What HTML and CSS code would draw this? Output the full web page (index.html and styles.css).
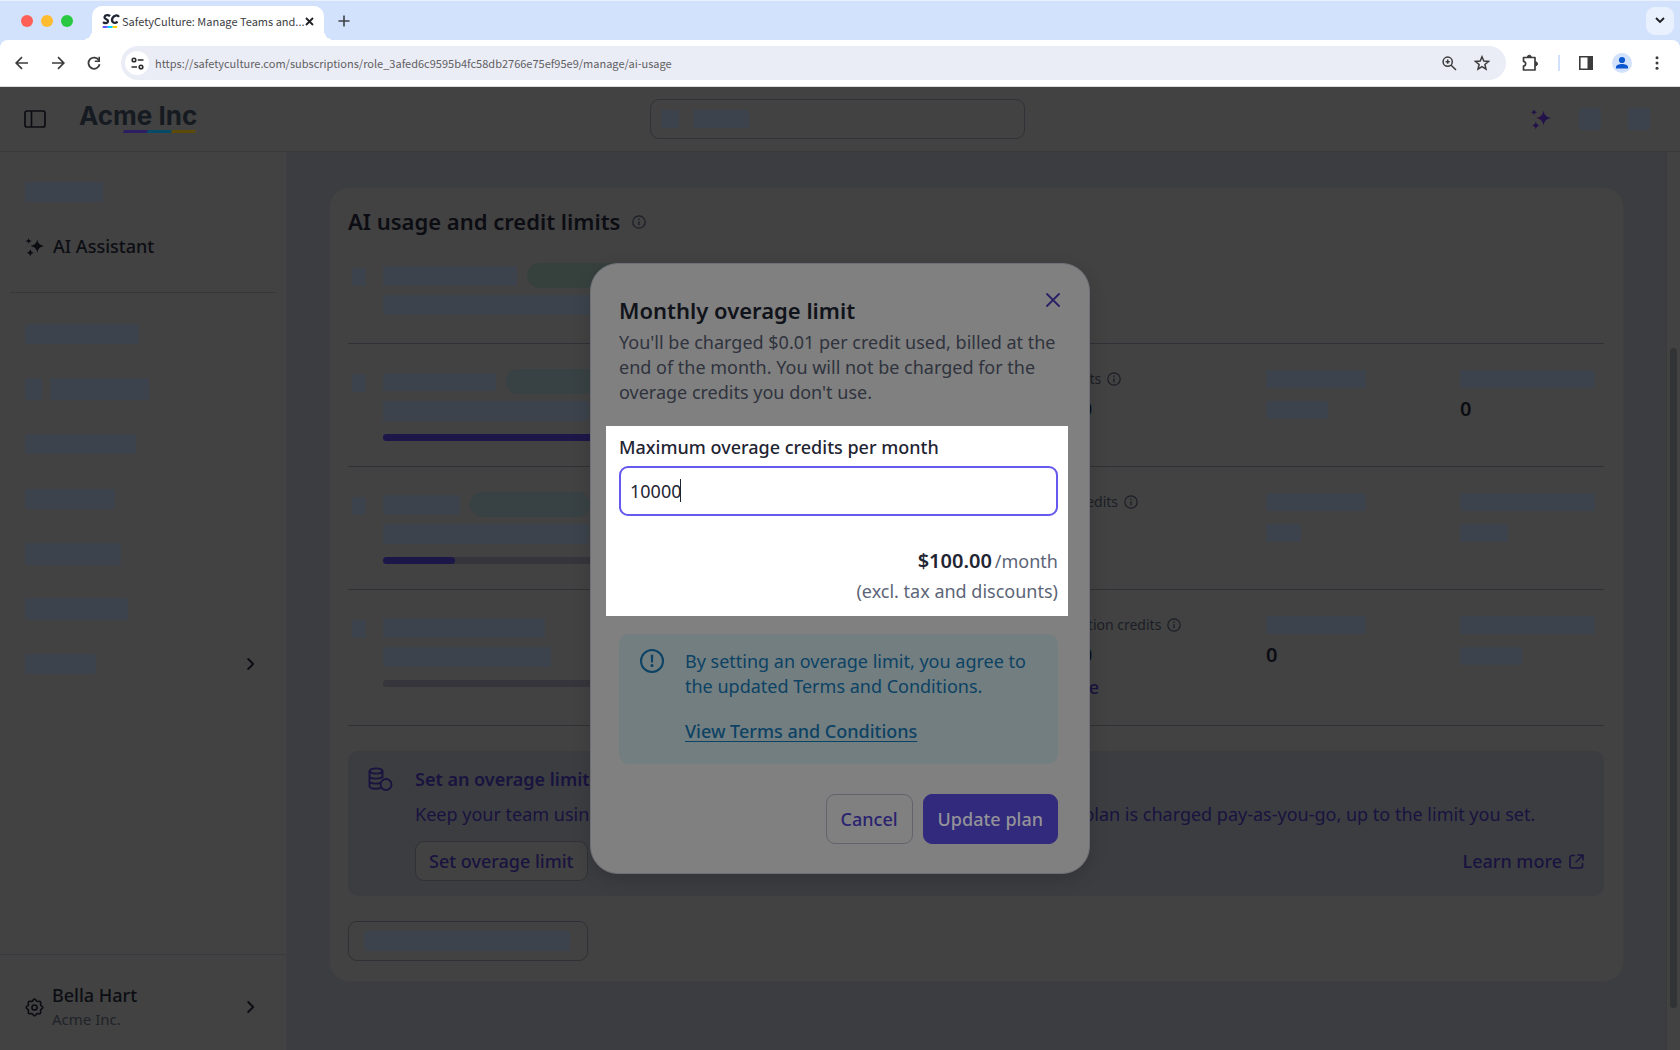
FILE: index.html
```html
<!DOCTYPE html>
<html lang="en">
<head>
<meta charset="utf-8">
<meta name="viewport" content="width=device-width, initial-scale=1">
<title>SafetyCulture: Manage Teams and Users</title>
<link rel="stylesheet" href="styles.css">
</head>
<body>
<svg class="sprite" aria-hidden="true">
  <symbol id="info" viewBox="0 0 14 14"><circle cx="7" cy="7" r="6.2" fill="none" stroke="currentColor" stroke-width="1.2"/><path d="M7 6.2v4M7 3.6v1.3" stroke="currentColor" stroke-width="1.3" fill="none"/></symbol>
  <symbol id="chevron" viewBox="0 0 8 12"><path d="M1.2 1l5 5-5 5" fill="none" stroke="currentColor" stroke-width="1.8" stroke-linecap="round" stroke-linejoin="round"/></symbol>
  <symbol id="sparkles" viewBox="0 0 22 22"><path d="M13.500 2.500c.9 4.600 2.400 6.200 7.500 7.500-5.100 1.300-6.600 2.900-7.500 7.500-.9-4.600-2.400-6.200-7.500-7.500 5.100-1.300 6.600-2.900 7.500-7.500z"/><path d="M4 1c.4 2 1.200 2.800 3.200 3.300C5.200 4.800 4.400 5.600 4 7.600 3.600 5.600 2.800 4.800.8 4.300 2.800 3.800 3.600 3 4 1z"/><path d="M5.800 13.200c.5 2.600 1.500 3.600 4 4.200-2.500.6-3.500 1.600-4 4.200-.5-2.600-1.500-3.600-4-4.200 2.500-.6 3.500-1.600 4-4.200z"/></symbol>
</svg>

<div class="tabstrip">
  <div class="lights"><i class="light red"></i><i class="light amber"></i><i class="light green"></i></div>
  <div class="tab">
    <svg class="favicon" viewBox="0 0 18 18" aria-hidden="true"><path d="M8 4.300C6.800 2.900 3 2.600 2.500 5 2 7.600 6.600 7 6 9.600 5.600 11.500 2.600 11.500 1 10.200" fill="none" stroke="#1f2533" stroke-width="2.300"/><path d="M17 4.800C15.500 2.700 11.800 3 10.400 6.200 9 10 12 12.200 15.600 9.800" fill="none" stroke="#1f2533" stroke-width="2.300"/><path d="M1 14h5l-.6 2H.4z" fill="#6559ff"/><path d="M6 14h5l-.6 2h-5z" fill="#00d1ff"/><path d="M11 14h4.500l-.6 2h-4.500z" fill="#ffd500"/></svg>
    <span class="tab-title">SafetyCulture: Manage Teams and...</span>
    <button class="bare" aria-label="Close tab"><svg width="9" height="9" viewBox="0 0 9 9"><path d="M1 1l7 7M8 1L1 8" stroke="#202124" stroke-width="1.800"/></svg></button>
  </div>
  <button class="bare new-tab" aria-label="New tab"><svg width="12" height="12" viewBox="0 0 12 12"><path d="M6 .5v11M.5 6h11" stroke="#3c4043" stroke-width="1.600"/></svg></button>
  <button class="tab-search" aria-label="Search tabs"><svg width="10" height="7" viewBox="0 0 10 7"><path d="M1 1l4 4 4-4" fill="none" stroke="#202124" stroke-width="1.900"/></svg></button>
</div>
<div class="toolbar">
  <div class="nav">
    <button class="bare" aria-label="Back"><svg width="14" height="14" viewBox="0 0 14 14"><path d="M13 7H1.500M7 1.200L1.200 7 7 12.800" fill="none" stroke="#3c3c3c" stroke-width="1.700"/></svg></button>
    <button class="bare" aria-label="Forward"><svg width="14" height="14" viewBox="0 0 14 14"><path d="M1 7h11.500M7 1.200L12.800 7 7 12.800" fill="none" stroke="#3c3c3c" stroke-width="1.700"/></svg></button>
    <button class="bare" aria-label="Reload"><svg width="14" height="14" viewBox="0 0 14 14"><path d="M12 4.400A5.600 5.600 0 1 0 12.600 8.300" fill="none" stroke="#3c3c3c" stroke-width="1.800"/><path d="M13 .8v5.200H7.800V4.400h3.600V.8z" fill="#3c3c3c"/></svg></button>
  </div>
  <div class="omnibox">
    <button class="site-info" aria-label="Site information"><svg width="13" height="13" viewBox="0 0 13 13" fill="none" stroke="#2b2b2b" stroke-width="1.600"><circle cx="3" cy="3" r="1.800"/><path d="M6.800 3H12.500M.5 10H6"/><circle cx="10" cy="10" r="1.800"/></svg></button>
    <input class="url" aria-label="Address" value="https://safetyculture.com/subscriptions/role_3afed6c9595b4fc58db2766e75ef95e9/manage/ai-usage">
    <button class="bare" aria-label="Zoom"><svg width="15" height="15" viewBox="0 0 15 15" fill="none" stroke="#3c3c3c" stroke-width="1.500"><circle cx="5.700" cy="5.700" r="4.600"/><path d="M9.200 9.200l4.800 4.800M5.700 3.600v4.200M3.600 5.700h4.200"/></svg></button>
    <button class="bare" aria-label="Bookmark"><svg width="16" height="16" viewBox="0 0 16 16"><path d="M8 1.800l1.800 4.300 4.700.4-3.600 3 1.100 4.600L8 11.700l-4 2.400 1.100-4.600-3.600-3 4.700-.4z" fill="none" stroke="#3c3c3c" stroke-width="1.500"/></svg></button>
  </div>
  <div class="extras">
    <button class="bare" aria-label="Extensions"><svg width="18" height="18" viewBox="0 0 18 18"><path d="M2.500 3.500h11.500V16H2.500v-3.800c3-.7 3-4.200 0-4.900z" fill="none" stroke="#3c3c3c" stroke-width="1.700" stroke-linejoin="round"/><path d="M6.300 3.200a2 2 0 0 1 4 0zM14.500 7.800a2 2 0 0 1 0 4z" fill="#3c3c3c" stroke="#3c3c3c"/></svg></button>
    <i class="bar"></i>
    <button class="bare" aria-label="Side panel"><svg width="14" height="14" viewBox="0 0 14 14"><path d="M.8.8h12.400v12.400H.8z" fill="none" stroke="#3c3c3c" stroke-width="1.600"/><path d="M8.500 1H13v12H8.500z" fill="#3c3c3c"/></svg></button>
    <button class="bare" aria-label="Profile"><svg width="20" height="20" viewBox="0 0 20 20"><circle cx="10" cy="10" r="10" fill="#d3e2fc"/><circle cx="10" cy="7" r="3.100" fill="#0b57d0"/><path d="M4 15.500v-1.500c0-2 3-3 6-3s6 1 6 3v1.500z" fill="#0b57d0"/></svg></button>
    <button class="bare kebab" aria-label="Menu"><svg width="4" height="14" viewBox="0 0 4 14" fill="#3c3c3c"><circle cx="2" cy="1.700" r="1.500"/><circle cx="2" cy="7" r="1.500"/><circle cx="2" cy="12.300" r="1.500"/></svg></button>
  </div>
</div>

<div class="app">
  <header class="topbar">
    <div class="brand-row">
      <button class="bare panel-toggle" aria-label="Toggle sidebar"><svg width="22" height="18" viewBox="0 0 22 18"><rect x="1" y="1" width="20" height="16" rx="2" fill="none" stroke="currentColor" stroke-width="1.700"/><path d="M7.500 1v16" stroke="currentColor" stroke-width="1.600"/></svg></button>
      <div class="brand">Acme Inc<svg class="brand-line" width="74" height="3" viewBox="0 0 74 3"><path d="M1 0h24l-1 3H0z" fill="#2d1e63"/><path d="M25 0h24l-1 3H24z" fill="#074a68"/><path d="M49 0h24l-1 3H48z" fill="#5c4a08"/></svg></div>
    </div>
    <div class="search"><i class="sk sk-search-icon"></i><i class="sk sk-search-text"></i></div>
    <div class="top-actions">
      <svg width="22" height="22" class="ai-mark"><defs><linearGradient id="ai" x1="0" x2="1"><stop offset="0" stop-color="#3c0f33"/><stop offset=".35" stop-color="#24104b"/><stop offset="1" stop-color="#1c1748"/></linearGradient></defs><use href="#sparkles"/></svg>
      <i class="sk sk-action"></i><i class="sk sk-action"></i>
    </div>
  </header>

  <div class="body">
    <nav class="sidebar">
      <div class="side-list">
        <div class="side-item"><i class="sk h20 w78"></i></div>
        <a class="side-item side-link" href="#assistant"><svg width="20" height="20" fill="currentColor"><use href="#sparkles"/></svg>AI Assistant</a>
      </div>
      <hr class="side-rule">
      <div class="side-list">
        <div class="side-item"><i class="sk h20 w114"></i></div>
        <div class="side-item"><i class="sk h22 w17"></i><i class="sk h22 w99"></i></div>
        <div class="side-item"><i class="sk h20 w111"></i></div>
        <div class="side-item"><i class="sk h20 w90"></i></div>
        <div class="side-item"><i class="sk h22 w96"></i></div>
        <div class="side-item"><i class="sk h22 w103"></i></div>
        <div class="side-item"><i class="sk h20 w71"></i><svg class="side-chevron" width="8" height="12"><use href="#chevron"/></svg></div>
      </div>
      <a class="account" href="#account">
        <svg width="19" height="19" viewBox="0 0 24 24" fill="none" stroke="currentColor" stroke-width="2.100" stroke-linejoin="round"><circle cx="12" cy="12" r="3.200"/><path d="M9.600 3.600Q12-.6 14.400 3.600Q14.800 4.300 16.200 4.400Q20.800 3.200 19.600 7.800Q19.700 9 20.400 9.600Q24.600 12 20.400 14.400Q19.700 15 19.600 16.200Q20.800 20.800 16.200 19.600Q15 19.700 14.400 20.400Q12 24.600 9.600 20.400Q9 19.700 7.800 19.600Q3.200 20.800 4.400 16.200Q4.300 15 3.600 14.400Q-.6 12 3.600 9.600Q4.300 9 4.400 7.800Q3.200 3.200 7.800 4.400Q9 4.300 9.600 3.600z"/></svg>
        <span class="account-text"><span class="account-name">Bella Hart</span><span class="account-org">Acme Inc.</span></span>
        <svg class="side-chevron" width="8" height="12"><use href="#chevron"/></svg>
      </a>
    </nav>

    <main class="content">
      <section class="card">
        <h1 class="card-title">AI usage and credit limits <svg width="14" height="14"><use href="#info"/></svg></h1>

        <div class="usage usage-plan">
          <i class="sk mark"></i>
          <div class="meter">
            <div class="meter-head"><i class="sk h20 w134"></i><i class="pill pill-green"></i></div>
            <i class="sk h20 w240"></i>
          </div>
        </div>

        <div class="usage">
          <i class="sk mark"></i>
          <div class="meter">
            <div class="meter-head"><i class="sk h18 w113"></i><i class="pill"></i></div>
            <i class="sk h20 w206"></i>
            <div class="track"><div class="fill" style="width:100%"></div></div>
          </div>
          <div class="stat"><span class="stat-label">Action credits <svg width="14" height="14"><use href="#info"/></svg></span><span class="stat-value">1000000</span></div>
          <div class="stat"><i class="sk stat-sk w100"></i><i class="sk h18 w62"></i></div>
          <div class="stat"><i class="sk stat-sk w135"></i><span class="stat-value">0</span></div>
        </div>

        <div class="usage">
          <i class="sk mark"></i>
          <div class="meter">
            <div class="meter-head"><i class="sk h20 w77"></i><i class="pill"></i></div>
            <i class="sk h20 w206"></i>
            <div class="track"><div class="fill" style="width:11.5%"></div></div>
          </div>
          <div class="stat"><span class="stat-label">Analytics credits <svg width="14" height="14"><use href="#info"/></svg></span><span class="stat-value">500</span></div>
          <div class="stat"><i class="sk stat-sk w100"></i><i class="sk h18 w35"></i></div>
          <div class="stat"><i class="sk stat-sk w135"></i><i class="sk h18 w48"></i></div>
        </div>

        <div class="usage">
          <i class="sk mark"></i>
          <div class="meter">
            <div class="meter-head"><i class="sk h20 w162"></i></div>
            <i class="sk h20 w168"></i>
            <div class="track"></div>
          </div>
          <div class="stat"><span class="stat-label">AI transcription credits <svg width="14" height="14"><use href="#info"/></svg></span><span class="stat-value">1000000</span><a class="stat-link" href="#usage">See usage</a></div>
          <div class="stat"><i class="sk stat-sk w100"></i><span class="stat-value">0</span></div>
          <div class="stat"><i class="sk stat-sk w135"></i><i class="sk h18 w62"></i></div>
        </div>

        <div class="overage">
          <svg width="25" height="25" viewBox="0 0 25 25" fill="none" stroke="currentColor" stroke-width="1.900"><ellipse cx="8" cy="4" rx="6.500" ry="2.600"/><path d="M1.500 4v15c0 1.600 2.800 2.700 6.500 2.700 1.800 0 3.300-.2 4.500-.7M14.500 4v7M1.500 9c0 1.500 2.800 2.600 6.500 2.600S14.500 10.500 14.500 9M1.500 14c0 1.500 2.800 2.600 6.500 2.600 1.500 0 3-.2 4-.6"/><circle cx="18" cy="17.500" r="5.500"/></svg>
          <div class="overage-body">
            <h2 class="overage-title">Set an overage limit</h2>
            <p class="overage-text">Keep your team using AI without interruption. All usage beyond credits in your plan is charged pay-as-you-go, up to the limit you set.</p>
            <div class="overage-actions">
              <button class="outline-btn">Set overage limit</button>
              <a class="learn" href="#learn">Learn more <svg width="15" height="15" viewBox="0 0 15 15" fill="none" stroke="currentColor" stroke-width="1.600" stroke-linecap="round" stroke-linejoin="round"><path d="M5.500 1.500H3a2 2 0 0 0-2 2V12a2 2 0 0 0 2 2h8.500a2 2 0 0 0 2-2V9.500M9 1h5v5M13.800 1.200L7 8"/></svg></a>
            </div>
          </div>
        </div>

        <button class="outline-btn pending" aria-label="Manage credits"><i class="sk h20 w206"></i></button>
      </section>
    </main>
    <div class="scrollbar"><i class="thumb"></i></div>
  </div>

  <div class="overlay">
    <form class="modal" role="dialog" aria-labelledby="modal-title">
      <div class="modal-head">
        <h2 class="modal-title" id="modal-title">Monthly overage limit</h2>
        <p class="modal-text">You'll be charged $0.01 per credit used, billed at the end of the month. You will not be charged for the overage credits you don't use.</p>
      </div>
      <button type="button" class="bare close" aria-label="Close"><svg width="14" height="14" viewBox="0 0 14 14"><path d="M1 1l12 12M13 1L1 13" stroke="currentColor" stroke-width="1.800" stroke-linecap="round"/></svg></button>
      <div class="spotlight">
        <label class="field-label" for="credits">Maximum overage credits per month</label>
        <input class="field" id="credits" value="10000" inputmode="numeric">
        <i class="caret"></i>
        <div class="price"><strong class="amount">$100.00</strong><span>/month</span></div>
        <div class="price-note">(excl. tax and discounts)</div>
      </div>
      <div class="modal-foot">
        <div class="notice">
          <svg width="24" height="24" viewBox="0 0 24 24"><circle cx="12" cy="12" r="11" fill="none" stroke="currentColor" stroke-width="2"/><path d="M10.700 5.800h2.600l-.4 7.700h-1.800z" fill="currentColor"/><circle cx="12" cy="16.600" r="1.500" fill="currentColor"/></svg>
          <div class="notice-body">
            <p>By setting an overage limit, you agree to the updated Terms and Conditions.</p>
            <a class="terms" href="#terms">View Terms and Conditions</a>
          </div>
        </div>
        <div class="buttons">
          <button type="button" class="btn btn-plain">Cancel</button>
          <button type="submit" class="btn btn-primary">Update plan</button>
        </div>
      </div>
    </form>
  </div>
</div>
</body>
</html>
```
FILE: styles.css
```css
:root {
  --surface: #424242;
  --canvas: #3c3d41;
  --line: #393a3d;
  --skeleton: #3c434c;
  --ink: #0c0d13;
  --muted: #1b1e26;
  --indigo: #18133f;
  --modal: #808080;
}

* { box-sizing: border-box; }

body {
  margin: 0;
  min-height: 100vh;
  display: flex;
  flex-direction: column;
  background: #d3e2fc;
  color: var(--ink);
  font: 18px/25px "Noto Sans", sans-serif;
}

h1, h2, p { margin: 0; }
button, input { font: inherit; color: inherit; }
svg { flex: none; }
.sprite { position: absolute; width: 0; height: 0; }

.bare {
  display: flex;
  padding: 0;
  border: 0;
  background: none;
}

/* browser chrome */
.tabstrip {
  display: flex;
  align-items: center;
  height: 40px;
  padding: 0 6px 0 21px;
  border-top: 1px solid #e9f0fd;
}
.lights { display: flex; gap: 8px; width: 71px; }
.light { width: 12px; height: 12px; border-radius: 50%; }
.red { background: #ff5f57; }
.amber { background: #febc2e; }
.green { background: #28c840; }

.tab {
  position: relative;
  align-self: flex-end;
  display: flex;
  align-items: center;
  width: 232px;
  height: 34px;
  padding: 0 12px 4px 10px;
  border-radius: 10px 10px 0 0;
  background: #fff;
}
.tab::before, .tab::after {
  content: "";
  position: absolute;
  bottom: 0;
  width: 10px;
  height: 10px;
}
.tab::before { left: -10px; background: radial-gradient(circle at 0 0, transparent 10px, #fff 10px); }
.tab::after { right: -10px; background: radial-gradient(circle at 100% 0, transparent 10px, #fff 10px); }
.favicon { width: 18px; height: 18px; margin-right: 2px; }
.tab-title {
  flex: 1;
  white-space: nowrap;
  font: 11px/18px "Noto Sans CJK SC", sans-serif;
  color: #3c4043;
}
.new-tab { margin-left: 14px; }
.tab-search {
  display: grid;
  place-items: center;
  width: 28px;
  height: 28px;
  margin-left: auto;
  border: 0;
  border-radius: 9px;
  background: #eaf1fe;
}

.toolbar {
  display: flex;
  align-items: center;
  height: 47px;
  padding: 0 21px 0 15px;
  border-bottom: 1px solid #dcdde0;
  border-radius: 8px 8px 0 0;
  background: #fff;
}
.nav { display: flex; gap: 22px; width: 106px; }
.omnibox {
  flex: 1;
  display: flex;
  align-items: center;
  gap: 17px;
  height: 34px;
  padding: 0 16px 0 4px;
  border-radius: 17px;
  background: #ebedf6;
}
.site-info {
  display: grid;
  place-items: center;
  width: 24px;
  height: 24px;
  padding: 0;
  border: 0;
  border-radius: 50%;
  background: #fff;
}
.url {
  flex: 1;
  min-width: 0;
  margin-left: -11px;
  padding: 0;
  border: 0;
  background: none;
  font: 11px/18px "Noto Sans CJK SC", sans-serif;
  color: #5f6062;
}
.extras { display: flex; align-items: center; gap: 19px; padding-left: 15px; }
.bar { width: 2px; height: 16px; background: #d3e2fc; }
.kebab { margin-left: 4px; }

/* application shell */
.app {
  position: relative;
  flex: 1;
  display: flex;
  flex-direction: column;
  background: var(--surface);
}
.topbar {
  display: grid;
  grid-template-columns: 1fr 375px 1fr;
  align-items: center;
  height: 65px;
  padding: 0 30px 0 24px;
  border-bottom: 1px solid var(--line);
}
.brand-row, .top-actions { display: flex; align-items: center; }
.brand-row { gap: 33px; }
.brand {
  position: relative;
  font: 700 26px/36px Inter, sans-serif;
  color: #161a21;
  padding-bottom: 6px;
}
.brand-line { position: absolute; right: 0; bottom: 7px; }
.search {
  display: flex;
  align-items: center;
  gap: 14px;
  height: 40px;
  padding: 0 10px;
  border: 1px solid #303238;
  border-radius: 9px;
}
.top-actions { justify-content: flex-end; gap: 27px; }
.ai-mark { fill: url(#ai); }

.sk { display: block; background: var(--skeleton); border-radius: 2px; }
.sk-search-icon { width: 18px; height: 18px; }
.sk-search-text { width: 56px; height: 18px; }
.sk-action { width: 22px; height: 22px; }
.h18 { height: 18px; }
.h20 { height: 20px; }
.h22 { height: 22px; }
.w17 { width: 17px; }
.w35 { width: 35px; }
.w48 { width: 48px; }
.w62 { width: 62px; }
.w71 { width: 71px; }
.w77 { width: 77px; }
.w78 { width: 78px; }
.w90 { width: 90px; }
.w96 { width: 96px; }
.w99 { width: 99px; }
.w100 { width: 100px; }
.w103 { width: 103px; }
.w111 { width: 111px; }
.w113 { width: 113px; }
.w114 { width: 114px; }
.w134 { width: 134px; }
.w135 { width: 135px; }
.w162 { width: 162px; }
.w168 { width: 168px; }
.w206 { width: 206px; }
.w240 { width: 240px; }

.body { flex: 1; display: flex; }
.sidebar {
  flex: none;
  display: flex;
  flex-direction: column;
  width: 287px;
  padding-top: 12px;
  border-right: 1px solid #3f4042;
}
.side-item {
  display: flex;
  align-items: center;
  gap: 8px;
  height: 55px;
  padding: 0 31px 0 25px;
}
.side-link { color: var(--ink); font-weight: 500; text-decoration: none; }
.side-rule {
  width: calc(100% - 20px);
  margin: 18px 10px 13px;
  border: 0;
  border-top: 1px solid #36373a;
}
.side-chevron { margin-left: auto; }
.account {
  display: flex;
  align-items: center;
  gap: 8px;
  margin-top: auto;
  padding: 28px 31px 19px 25px;
  border-top: 1px solid #383a3f;
  color: var(--ink);
  text-decoration: none;
}
.account-text { display: flex; flex-direction: column; }
.account-name { font-weight: 500; }
.account-org { font-size: 15px; line-height: 23px; color: #202329; }

.content { flex: 1; min-width: 0; padding: 35px 42px 68px; background: var(--canvas); }
.card {
  padding: 18px 19px 20px 18px;
  border: 1px solid #3f3f42;
  border-radius: 20px;
  background: var(--surface);
}
.card-title {
  display: flex;
  align-items: center;
  gap: 12px;
  margin-bottom: 1px;
  font-size: 22px;
  font-weight: 600;
  line-height: 31px;
}
.card-title svg, .stat-label svg { color: var(--muted); }

.usage {
  display: grid;
  grid-template-columns: 35px 1fr 254px 194px 144px;
  padding: 25px 0;
  border-bottom: 1px solid #303136;
}
.usage-plan { padding-bottom: 28px; }
.mark { width: 14px; height: 18px; margin: 5px 0 0 4px; }
.meter-head { display: flex; align-items: center; gap: 10px; height: 25px; margin-bottom: 7px; }
.pill { width: 120px; height: 25px; border-radius: 13px; background: #384143; }
.pill-green { background: #36413e; }
.track { height: 7px; margin-top: 13px; border-radius: 4px; background: #36353b; }
.fill { height: 100%; border-radius: 4px; background: #1c1748; }
.stat { display: flex; flex-direction: column; align-items: flex-start; }
.stat-label {
  display: flex;
  align-items: center;
  gap: 6px;
  margin-bottom: 5px;
  font-size: 14px;
  line-height: 20px;
  color: var(--muted);
}
.stat-sk { height: 18px; margin: 1px 0 13px; }
.stat-value { font-size: 20px; font-weight: 600; line-height: 30px; }
.stat-sk + .stat-value { margin-top: -7px; }
.stat-link { margin-top: 5px; color: var(--indigo); font-weight: 500; text-decoration: none; }

.overage {
  display: flex;
  gap: 22px;
  margin-top: 25px;
  padding: 16px 20px 15px;
  border-radius: 10px;
  background: var(--canvas);
  color: var(--indigo);
}
.overage-body { flex: 1; min-width: 0; }
.overage-title { font-size: 18px; font-weight: 600; line-height: 25px; }
.overage-text { margin: 10px 0 14px; }
.overage-actions { display: flex; align-items: center; justify-content: space-between; }
.outline-btn {
  height: 40px;
  padding: 0 13px;
  border: 1px solid #303136;
  border-radius: 9px;
  background: var(--surface);
  font-weight: 500;
}
.learn { display: flex; align-items: center; gap: 7px; color: inherit; font-weight: 500; text-decoration: none; }
.pending { display: flex; align-items: center; width: 240px; margin-top: 25px; padding: 0 15px; }

.scrollbar { display: flex; width: 14px; padding: 196px 3px 42px; border-left: 1px solid #3b3b3c; }
.thumb { flex: 1; border-radius: 4px; background: #323334; }

/* modal */
.overlay {
  position: absolute;
  inset: 0;
  display: grid;
  place-items: center;
}
.modal {
  position: relative;
  width: 500px;
  max-width: 100%;
  border: 1px solid #6f7077;
  border-radius: 28px;
  background: var(--modal);
  box-shadow: 0 6px 18px rgba(0, 0, 0, .14);
}
.modal-head { padding: 31px 28px 21px; }
.modal-title { margin-bottom: 5px; font-size: 22px; font-weight: 600; line-height: 30px; color: #11131a; }
.modal-text { color: #2f333d; }
.close { position: absolute; top: 29px; right: 29px; color: #272166; }

.spotlight {
  position: relative;
  margin: 0 21px 0 15px;
  padding: 9px 10px 12px 13px;
  background: #fff;
}
.field-label { display: block; margin-bottom: 7px; font-weight: 500; line-height: 24px; color: #1f2533; }
.field {
  display: block;
  width: 100%;
  height: 50px;
  padding: 0 9px;
  border: 2px solid #6559ee;
  border-radius: 9px;
  background: #fff;
  color: #1f2533;
  outline: 0;
}
.caret { position: absolute; left: 74px; top: 53px; width: 1px; height: 23px; background: #1f2533; }
.price {
  display: flex;
  justify-content: flex-end;
  align-items: baseline;
  gap: 3px;
  margin: 30px 0 2px;
  line-height: 30px;
  color: #5c6577;
}
.amount { font-size: 20px; font-weight: 600; color: #1f2533; }
.price-note { text-align: right; line-height: 26px; color: #5c6577; }

.modal-foot { padding: 18px 31px 29px 28px; }
.notice {
  display: flex;
  gap: 21px;
  padding: 15px 20px 20px 21px;
  border-radius: 10px;
  background: #727e80;
  color: #0c4264;
}
.notice-body p { margin-bottom: 20px; }
.terms { display: block; color: inherit; font-weight: 500; text-underline-offset: 3px; }
.buttons { display: flex; justify-content: flex-end; gap: 10px; margin-top: 30px; }
.btn { height: 50px; padding: 0 14px; border: 1px solid #62636c; border-radius: 9px; font-weight: 500; }
.btn-plain { background: transparent; color: #2a2370; }
.btn-primary { border-color: #322a7c; background: #322a7c; color: #939399; }
```
